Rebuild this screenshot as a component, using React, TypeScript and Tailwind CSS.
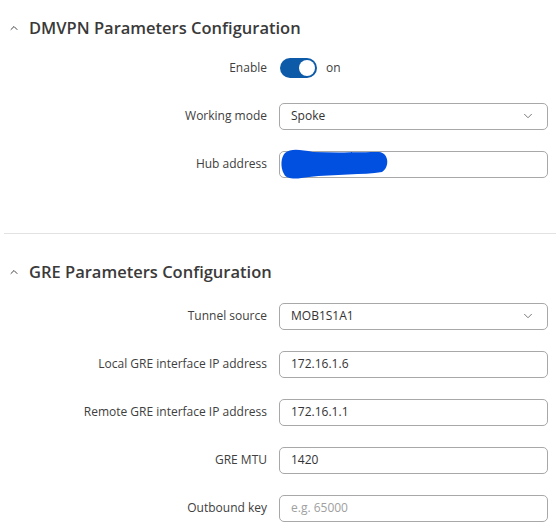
import { ChevronUp, ChevronDown } from "lucide-react";

function Row({ label, children }: { label: string; children: React.ReactNode }) {
  return (
    <div className="flex items-center h-[48px]">
      <div className="w-[267px] text-right text-[12px] text-[#404040] shrink-0">{label}</div>
      <div className="ml-[12px] w-[269px]">{children}</div>
    </div>
  );
}

function Field({ value, placeholder }: { value?: string; placeholder?: string }) {
  return (
    <div className="h-[27px] border border-[#a8a8a8] rounded-[5px] flex items-center px-[11px] text-[12px] bg-white">
      {value ? (
        <span className="text-[#333]">{value}</span>
      ) : (
        <span className="text-[#a0a0a0]">{placeholder}</span>
      )}
    </div>
  );
}

function Select({ value }: { value: string }) {
  return (
    <div className="h-[27px] border border-[#a8a8a8] rounded-[5px] flex items-center justify-between pl-[11px] pr-[12px] text-[12px] bg-white">
      <span className="text-[#333]">{value}</span>
      <ChevronDown size={14} strokeWidth={1.5} className="text-[#666]" />
    </div>
  );
}

function Heading({ title }: { title: string }) {
  return (
    <div className="flex items-center h-[40px] pl-[8px]">
      <ChevronUp size={12} strokeWidth={2} className="text-[#444] mr-[9px]" />
      <span className="text-[16.5px] font-semibold text-[#3a3a3a]">{title}</span>
    </div>
  );
}

export default function App() {
  return (
    <div className="w-[556px] h-[529px] bg-white overflow-hidden pt-[8px]" style={{ fontFamily: '"Open Sans", sans-serif' }}>
      <Heading title="DMVPN Parameters Configuration" />
      <div className="h-[8px]" />
      <div className="flex items-center h-[24px]">
        <div className="w-[267px] text-right text-[12px] text-[#404040]">Enable</div>
        <div className="ml-[13px] flex items-center">
          <div className="w-[37px] h-[20px] rounded-full bg-[#0c5aa8] flex items-center justify-end pr-[2px]">
            <div className="w-[16px] h-[16px] rounded-full bg-white" />
          </div>
          <span className="ml-[9px] text-[12px] text-[#404040]">on</span>
        </div>
      </div>
      <div className="h-[12px]" />
      <Row label="Working mode">
        <Select value="Spoke" />
      </Row>
      <Row label="Hub address">
        <div className="relative">
          <Field value=" " />
          <svg className="absolute left-[0px] top-[-4px]" width="112" height="34" viewBox="0 0 112 34">
            <path
              d="M6 6 C 12 1, 22 3, 34 5 C 60 6, 85 5, 100 5 C 110 6, 111 20, 103 25 C 85 28, 55 27, 30 30 C 18 32, 8 33, 5 27 C 1 20, 2 10, 6 6 Z"
              fill="#0250e0"
            />
          </svg>
        </div>
      </Row>
      <div className="h-[45px]" />
      <div className="ml-[4px] border-t border-[#e2e2e2]" />
      <div className="h-[18px]" />
      <Heading title="GRE Parameters Configuration" />
      <Row label="Tunnel source">
        <Select value="MOB1S1A1" />
      </Row>
      <Row label="Local GRE interface IP address">
        <Field value="172.16.1.6" />
      </Row>
      <Row label="Remote GRE interface IP address">
        <Field value="172.16.1.1" />
      </Row>
      <Row label="GRE MTU">
        <Field value="1420" />
      </Row>
      <Row label="Outbound key">
        <Field placeholder="e.g. 65000" />
      </Row>
    </div>
  );
}
